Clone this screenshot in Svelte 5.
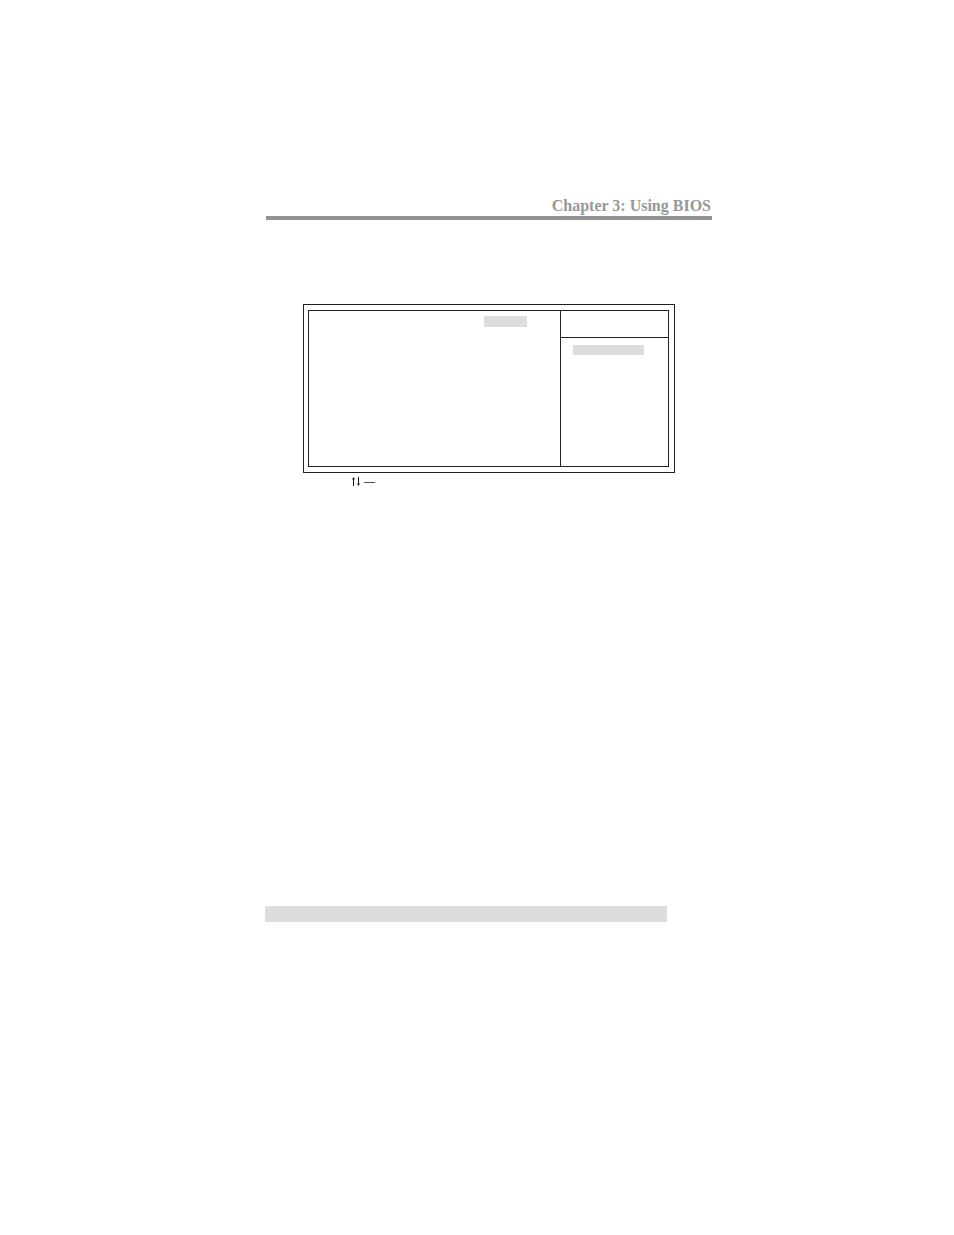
<script>
  const title = 'Chapter 3: Using BIOS';
</script>

<main class="page">
  <header class="chapter">
    <h1>{title}</h1>
  </header>

  <!-- BIOS setup screen: option list on the left, item help on the right -->
  <figure class="figure">
    <div class="frame">
      <div class="screen">
        <div class="options">
          <div class="value"></div>
        </div>
        <div class="help">
          <div class="help-title"></div>
          <div class="help-body">
            <div class="level"></div>
          </div>
        </div>
      </div>
    </div>
    <figcaption class="keys">
      <svg width="9" height="10" viewBox="0 0 9 10" aria-label="Up and down" role="img">
        <path d="M1.5 1V9" />
        <path class="head" d="M1.5 0L3 2.6H0Z" />
        <path d="M6.5 0V8" />
        <path class="head" d="M6.5 9L8 6.4H5Z" />
      </svg>
      <span>—</span>
    </figcaption>
  </figure>

  <footer class="footer">
    <div class="page-bar"></div>
  </footer>
</main>

<style>
  :global(body) {
    margin: 0;
    background: #fff;
  }

  .page {
    box-sizing: border-box;
    min-height: 100vh;
    padding-top: 196px;
  }

  .chapter {
    margin: 0 242px 0 266px;
    border-bottom: 4px solid #939297;
  }

  h1 {
    margin: 0;
    padding-right: 1px;
    font-family: Palatino, 'Palatino Linotype', 'Liberation Serif', serif;
    font-size: 16px;
    line-height: 20px;
    font-weight: 700;
    color: #96979b;
    text-align: right;
    white-space: nowrap;
  }

  .figure {
    margin: 84px 279px 0 303px;
  }

  .frame {
    padding: 5px 5px 5px 4px;
    border: 1px solid #231f20;
  }

  .screen {
    display: grid;
    grid-template-columns: minmax(0, 7fr) minmax(0, 3fr);
    min-height: 155px;
    border: 1px solid #231f20;
  }

  .options {
    display: flex;
    justify-content: flex-end;
    align-items: flex-start;
    padding: 5px 33px 0 0;
  }

  .value {
    width: 43px;
    height: 11px;
    background: #dcddde;
  }

  .help {
    border-left: 1px solid #231f20;
  }

  .help-title {
    height: 26px;
    border-bottom: 1px solid #231f20;
  }

  .help-body {
    padding: 7px 24px 0 12px;
  }

  .level {
    height: 10px;
    background: #dcddde;
  }

  .keys {
    display: flex;
    align-items: flex-start;
    gap: 3px;
    padding: 4px 0 0 49px;
    font-family: 'Liberation Sans', sans-serif;
    font-size: 11px;
    line-height: 8px;
    color: #231f20;
  }

  .keys svg {
    fill: none;
    stroke: #231f20;
    stroke-width: 1;
  }

  .keys .head {
    fill: #231f20;
    stroke: none;
  }

  .footer {
    margin: 419px 287px 0 265px;
  }

  .page-bar {
    height: 16px;
    background: #dcddde;
  }
</style>
